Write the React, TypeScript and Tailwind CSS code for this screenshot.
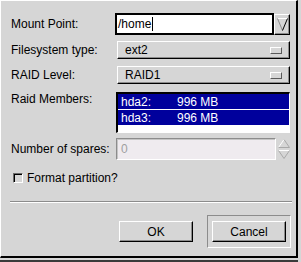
import React from "react";

const raised =
  "border-t border-l border-t-white border-l-white border-b border-r border-b-black border-r-black shadow-[inset_-1px_-1px_0_#8c8c8c]";

function OptionMenu({ value }: { value: string }) {
  return (
    <div className={`ml-[2px] w-[173px] h-[18px] flex items-center pl-[7px] pr-[7px] bg-[#d6d6d6] ${raised}`}>
      <span>{value}</span>
      <div className="ml-auto w-[12px] h-[7px] border-t border-l border-white border-b border-r border-b-[#5a5a5a] border-r-[#5a5a5a]" />
    </div>
  );
}

export default function App() {
  return (
    <div className="w-[301px] h-[262px] bg-[#d6d6d6] overflow-hidden text-[12px] leading-[14px] text-black font-['Liberation_Sans',Arial,sans-serif]">
      <div className="w-[298px] h-[258px] border-t border-l border-white border-r-2 border-b-2 border-r-black border-b-black flex flex-col pl-[10px]">
        {/* Mount point */}
        <div className="mt-[12px] h-[22px] flex items-center">
          <div className="w-[104px]">Mount Point:</div>
          <div className="w-[159px] h-[22px] border-2 border-black bg-white flex items-center pl-[1px]">
            <span>/home</span>
            <span className="w-px h-[14px] bg-black ml-[1px]" />
          </div>
          <div className={`w-[16px] h-[21px] self-start mt-[1px] flex items-center justify-center ${raised}`}>
            <svg width="11" height="13" viewBox="0 0 11 13">
              <polyline points="0.5,0.5 10.5,0.5" stroke="#ffffff" fill="none" />
              <polyline points="0.5,0.5 5.5,12.5" stroke="#8c8c8c" fill="none" />
              <polyline points="10.5,0.5 5.5,12.5" stroke="#000000" fill="none" />
            </svg>
          </div>
        </div>

        {/* Filesystem type */}
        <div className="mt-[6px] h-[18px] flex items-center">
          <div className="w-[104px]">Filesystem type:</div>
          <OptionMenu value="ext2" />
        </div>

        {/* RAID level */}
        <div className="mt-[7px] h-[18px] flex items-center">
          <div className="w-[104px]">RAID Level:</div>
          <OptionMenu value="RAID1" />
        </div>

        {/* Raid members */}
        <div className="mt-[8px] flex items-start">
          <div className="w-[104px]">Raid Members:</div>
          <div className="ml-[1px] w-[174px] h-[41px] border-t-2 border-l-2 border-t-black border-l-black border-b border-r border-b-white border-r-white bg-white flex flex-col gap-px">
            <div className="h-[15px] bg-[#00009c] text-white flex items-center pl-[3px]">
              <span className="w-[56px]">hda2:</span>
              <span>996 MB</span>
            </div>
            <div className="h-[15px] bg-[#00009c] text-white flex items-center pl-[3px]">
              <span className="w-[56px]">hda3:</span>
              <span>996 MB</span>
            </div>
          </div>
        </div>

        {/* Spares */}
        <div className="mt-[5px] h-[22px] flex items-center">
          <div className="w-[104px]">Number of spares:</div>
          <div className="ml-[1px] w-[160px] h-[22px] border-t border-l border-t-[#8c8c8c] border-l-[#8c8c8c] border-b border-r border-b-white border-r-white bg-[#efebef] shadow-[inset_1px_1px_0_#c4c4c4] flex items-center pl-[4px] text-[#a0a0a0]">
            0
          </div>
          <div className="ml-[2px] w-[12px] h-[22px] flex flex-col justify-center gap-[2px]">
            <svg width="12" height="9" viewBox="0 0 12 9">
              <polyline points="0.5,8.5 6,0.5" stroke="#ffffff" fill="none" />
              <polyline points="6,0.5 11.5,8.5 0.5,8.5" stroke="#a8a8a8" fill="none" />
            </svg>
            <svg width="12" height="9" viewBox="0 0 12 9">
              <polyline points="0.5,0.5 11.5,0.5" stroke="#ffffff" fill="none" />
              <polyline points="0.5,0.5 6,8.5 11.5,0.5" stroke="#a8a8a8" fill="none" />
            </svg>
          </div>
        </div>

        {/* Format checkbox */}
        <div className="mt-[13px] h-[10px] flex items-center">
          <div className="ml-[2px] w-[10px] h-[10px] border-t border-l border-t-[#6a6a6a] border-l-[#6a6a6a] border-b border-r border-b-white border-r-white shadow-[inset_1px_1px_0_#000]" />
          <span className="ml-[4px]">Format partition?</span>
        </div>

        {/* Separator */}
        <div className="mt-[18px] ml-[-1px] w-[282px] border-t border-t-[#8c8c8c] border-b border-b-white" />

        {/* Buttons */}
        <div className="mt-[12px] flex items-center">
          <button className={`ml-[108px] w-[74px] h-[21px] bg-[#d6d6d6] flex items-center justify-center ${raised}`}>
            OK
          </button>
          <div className="ml-[14px] border-t border-l border-t-[#8c8c8c] border-l-[#8c8c8c] border-b border-r border-b-white border-r-white px-[4px] py-[5px]">
            <button className={`w-[74px] h-[21px] bg-[#d6d6d6] flex items-center justify-center ${raised}`}>
              Cancel
            </button>
          </div>
        </div>
      </div>
      <div className="w-[298px] h-[4px] border-b-2 border-b-[#3a3a3a]" />
    </div>
  );
}
